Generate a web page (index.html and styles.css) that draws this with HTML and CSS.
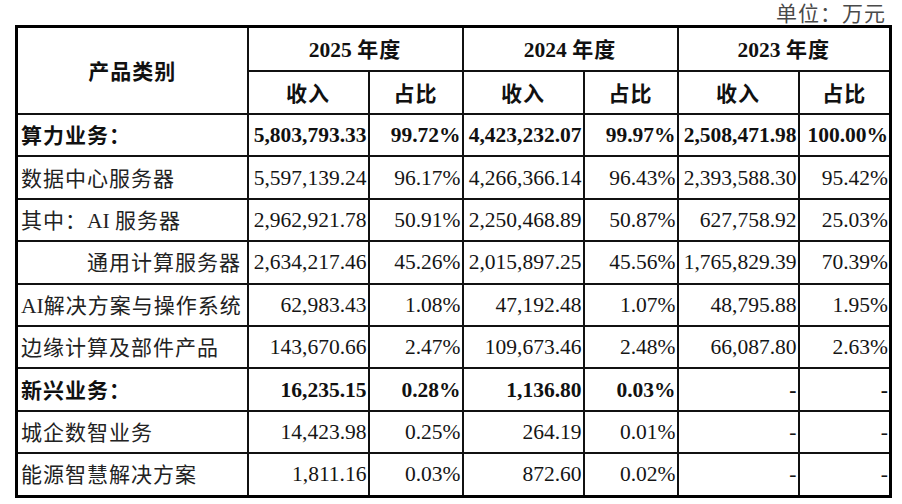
FILE: index.html
```html
<!DOCTYPE html>
<html lang="zh-CN">
<head>
<meta charset="utf-8">
<title>产品类别收入</title>
<link rel="stylesheet" href="styles.css">
</head>
<body>
<div class="wrap">
  <div class="unit"><span class="zh unit-text">单位：万元</span></div>
  <table class="tbl">
    <colgroup>
      <col class="c-name">
      <col class="c-rev">
      <col class="c-pct">
      <col class="c-rev">
      <col class="c-pct">
      <col class="c-rev">
      <col class="c-pct-last">
    </colgroup>
    <thead>
      <tr class="h1">
        <th rowspan="2"><span class="zh">产品类别</span></th>
        <th colspan="2">2025 <span class="zh">年度</span></th>
        <th colspan="2">2024 <span class="zh">年度</span></th>
        <th colspan="2">2023 <span class="zh">年度</span></th>
      </tr>
      <tr class="h2">
        <th><span class="zh">收入</span></th>
        <th><span class="zh">占比</span></th>
        <th><span class="zh">收入</span></th>
        <th><span class="zh">占比</span></th>
        <th><span class="zh">收入</span></th>
        <th><span class="zh">占比</span></th>
      </tr>
    </thead>
    <tbody>
      <tr class="bold">
        <td class="name"><span class="zh">算力业务：</span></td>
        <td>5,803,793.33</td><td>99.72%</td>
        <td>4,423,232.07</td><td>99.97%</td>
        <td>2,508,471.98</td><td>100.00%</td>
      </tr>
      <tr>
        <td class="name"><span class="zh">数据中心服务器</span></td>
        <td>5,597,139.24</td><td>96.17%</td>
        <td>4,266,366.14</td><td>96.43%</td>
        <td>2,393,588.30</td><td>95.42%</td>
      </tr>
      <tr>
        <td class="name"><span class="zh">其中：</span>AI <span class="zh">服务器</span></td>
        <td>2,962,921.78</td><td>50.91%</td>
        <td>2,250,468.89</td><td>50.87%</td>
        <td>627,758.92</td><td>25.03%</td>
      </tr>
      <tr>
        <td class="name indent"><span class="zh">通用计算服务器</span></td>
        <td>2,634,217.46</td><td>45.26%</td>
        <td>2,015,897.25</td><td>45.56%</td>
        <td>1,765,829.39</td><td>70.39%</td>
      </tr>
      <tr>
        <td class="name">AI<span class="zh">解决方案与操作系统</span></td>
        <td>62,983.43</td><td>1.08%</td>
        <td>47,192.48</td><td>1.07%</td>
        <td>48,795.88</td><td>1.95%</td>
      </tr>
      <tr>
        <td class="name"><span class="zh">边缘计算及部件产品</span></td>
        <td>143,670.66</td><td>2.47%</td>
        <td>109,673.46</td><td>2.48%</td>
        <td>66,087.80</td><td>2.63%</td>
      </tr>
      <tr class="bold">
        <td class="name"><span class="zh">新兴业务：</span></td>
        <td>16,235.15</td><td>0.28%</td>
        <td>1,136.80</td><td>0.03%</td>
        <td>-</td><td>-</td>
      </tr>
      <tr>
        <td class="name"><span class="zh">城企数智业务</span></td>
        <td>14,423.98</td><td>0.25%</td>
        <td>264.19</td><td>0.01%</td>
        <td>-</td><td>-</td>
      </tr>
      <tr>
        <td class="name"><span class="zh">能源智慧解决方案</span></td>
        <td>1,811.16</td><td>0.03%</td>
        <td>872.60</td><td>0.02%</td>
        <td>-</td><td>-</td>
      </tr>
    </tbody>
  </table>
</div>
</body>
</html>
```

FILE: styles.css
```css
html, body {
  margin: 0;
  padding: 0;
  background: #ffffff;
}

body {
  font-family: "Liberation Serif", "Noto Sans CJK SC", serif;
  font-size: 21.5px;
  color: #151515;
}

.wrap {
  width: 874px;
  padding-left: 15px;
}

.zh {
  font-family: "Noto Sans CJK SC", "Liberation Serif", sans-serif;
  font-size: 21px;
  letter-spacing: 1px;
}

.unit {
  box-sizing: border-box;
  height: 25px;
  padding-top: 1px;
  padding-right: 3px;
  text-align: right;
  color: #4a4a4a;
}

.unit-text {
  display: inline-block;
  line-height: 22px;
}

.tbl {
  width: 874px;
  table-layout: fixed;
  border-collapse: collapse;
  border: 3px solid #000;
}

.c-name { width: 231px; }
.c-rev { width: 121px; }
.c-pct { width: 94px; }
.c-pct-last { width: 92px; }

.tbl th,
.tbl td {
  border: 2px solid #111;
  padding: 0 1px 0 1px;
  line-height: 24px;
  white-space: nowrap;
  vertical-align: middle;
  overflow: hidden;
}

.tbl th {
  font-weight: 700;
  text-align: center;
  color: #111;
}

.tbl .h1 th {
  height: 42px;
}

.tbl .h2 th {
  height: 41px;
}

.tbl td {
  height: 40.4px;
  text-align: right;
}

.tbl td.name {
  text-align: left;
  padding-left: 3px;
  color: #222;
}

.tbl td.indent {
  padding-left: 69px;
}

.tbl tr.bold td {
  font-weight: 700;
  color: #111;
}
```
